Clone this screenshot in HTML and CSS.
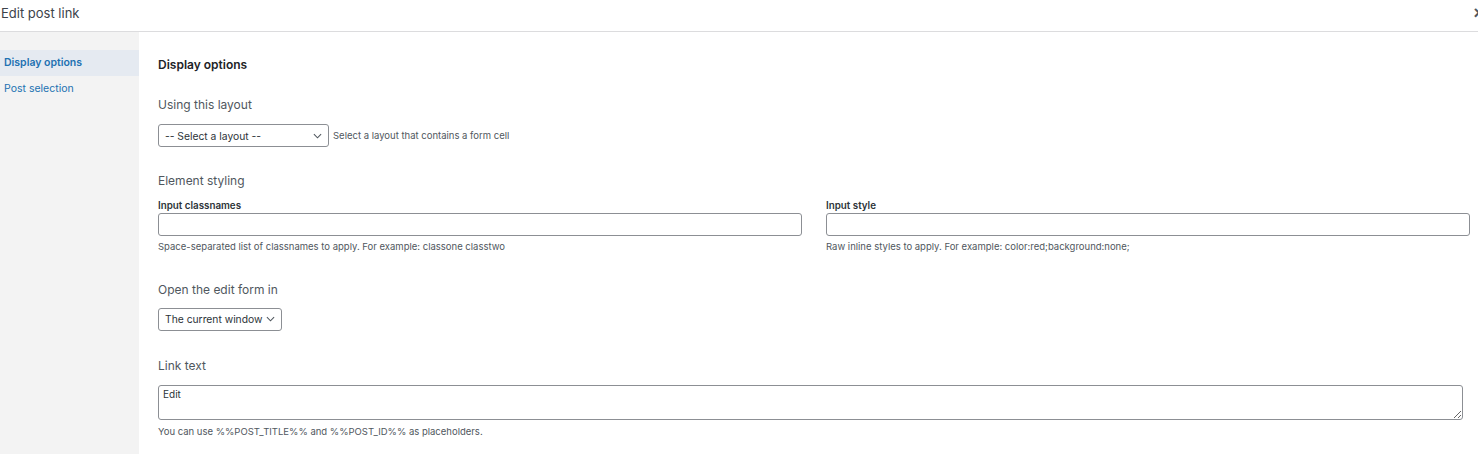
FILE: index.html
```html
<!DOCTYPE html>
<html lang="en">

<head>
    <meta charset="UTF-8">
    <title>Edit post link</title>
    <link rel="stylesheet" href="styles.css">
</head>

<body>
    <header class="modal-head">
        <h1>Edit post link</h1>
        <button class="luk" aria-label="Close">&times;</button>
    </header>

    <section class="modal-body">
        <nav class="tabs">
            <a href="#" class="tab valgt">Display options</a>
            <a href="#" class="tab">Post selection</a>
        </nav>

        <main class="panel">
            <h2>Display options</h2>

            <section class="group layout">
                <h3>Using this layout</h3>
                <div class="inline">
                    <div class="select wide">
                        <span>-- Select a layout --</span>
                        <svg viewBox="0 0 10 6"><path d="M1 1l4 4 4-4" /></svg>
                    </div>
                    <span class="hint">Select a layout that contains a form cell</span>
                </div>
            </section>

            <section class="group styling">
                <h3>Element styling</h3>
                <div class="cols">
                    <div class="field">
                        <label>Input classnames</label>
                        <input type="text">
                        <p class="hint">Space-separated list of classnames to apply. For example: classone classtwo</p>
                    </div>
                    <div class="field">
                        <label>Input style</label>
                        <input type="text">
                        <p class="hint">Raw inline styles to apply. For example: color:red;background:none;</p>
                    </div>
                </div>
            </section>

            <section class="group target">
                <h3>Open the edit form in</h3>
                <div class="select">
                    <span>The current window</span>
                    <svg viewBox="0 0 10 6"><path d="M1 1l4 4 4-4" /></svg>
                </div>
            </section>

            <section class="group">
                <h3>Link text</h3>
                <textarea class="linktext">Edit</textarea>
                <p class="hint">You can use %%POST_TITLE%% and %%POST_ID%% as placeholders.</p>
            </section>
        </main>
    </section>
</body>

</html>
```

FILE: styles.css
```css
* {
    margin: 0;
    box-sizing: border-box;
}

body {
    font-family: Inter, "Liberation Sans", sans-serif;
    color: #1d2327;
    background-color: white;
    height: 454px;
    overflow: hidden;
    display: flex;
    flex-direction: column;
}

.modal-head {
    flex-shrink: 0;
    height: 32px;
    border-bottom: 1px solid #dcdcde;
    display: flex;
    justify-content: space-between;
    align-items: center;
    padding-left: 1px;
    padding-bottom: 5px;
    overflow: hidden;
}

.modal-head h1 {
    font-size: 13px;
    font-weight: 400;
    color: #3c434a;
}

.luk {
    border: none;
    background: none;
    padding: 0;
    font-size: 18px;
    font-weight: 700;
    line-height: 18px;
    color: #50575e;
    margin-right: -6px;
}

.modal-body {
    flex-grow: 1;
    display: flex;
}

.tabs {
    width: 139px;
    flex-shrink: 0;
    background-color: #f3f3f3;
    padding-top: 18px;
    display: flex;
    flex-direction: column;
}

.tab {
    display: block;
    height: 26px;
    line-height: 26px;
    padding-left: 4px;
    font-size: 10.5px;
    color: #2271b1;
    text-decoration: none;
}

.tab.valgt {
    background-color: #e5eaf1;
    font-weight: 600;
}

.panel {
    flex-grow: 1;
    padding: 25px 8px 0 19px;
}

.panel h2 {
    font-size: 12px;
    line-height: 16px;
    font-weight: 600;
    margin-bottom: 24px;
}

.group {
    margin-bottom: 25px;
}

.group.layout {
    margin-bottom: 26px;
}

.group.styling {
    margin-bottom: 29px;
}

.group.target {
    margin-bottom: 27px;
}

.group h3 {
    font-size: 12px;
    line-height: 16px;
    font-weight: 400;
    color: #50575e;
    margin-bottom: 11px;
}

.group.target h3 {
    margin-bottom: 9px;
}

.inline {
    display: flex;
    align-items: center;
    gap: 4px;
}

.select {
    display: inline-flex;
    align-items: center;
    justify-content: space-between;
    gap: 4px;
    height: 23px;
    padding: 0 6px;
    border: 1px solid #8c8f94;
    border-radius: 3px;
    font-size: 10.3px;
    color: #2c3338;
}

.select.wide {
    width: 171px;
}

.select svg {
    width: 9px;
    height: 6px;
    fill: none;
    stroke: #50575e;
    stroke-width: 1.2;
}

.hint {
    font-size: 9.5px;
    line-height: 12px;
    color: #50575e;
}

.cols {
    display: grid;
    grid-template-columns: 1fr 1fr;
    gap: 24px;
}

.field label {
    display: block;
    font-size: 9.8px;
    line-height: 12px;
    font-weight: 600;
    color: #2c3338;
    margin-bottom: 1px;
}

.field input {
    display: block;
    width: 100%;
    height: 23px;
    border: 1px solid #8c8f94;
    border-radius: 3px;
    margin-bottom: 5px;
}

.linktext {
    display: block;
    width: calc(100% - 7px);
    height: 35px;
    padding: 2px 4px;
    border: 1px solid #8c8f94;
    border-radius: 3px;
    font-family: inherit;
    font-size: 10px;
    color: #2c3338;
    resize: vertical;
    margin-bottom: 6px;
}
```
